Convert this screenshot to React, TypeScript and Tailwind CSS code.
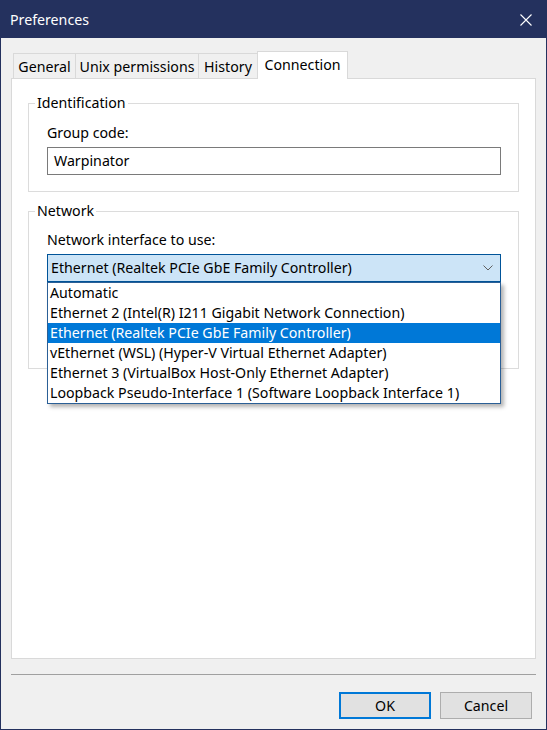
const items = [
    'Automatic',
    'Ethernet 2 (Intel(R) I211 Gigabit Network Connection)',
    'Ethernet (Realtek PCIe GbE Family Controller)',
    'vEthernet (WSL) (Hyper-V Virtual Ethernet Adapter)',
    'Ethernet 3 (VirtualBox Host-Only Ethernet Adapter)',
    'Loopback Pseudo-Interface 1 (Software Loopback Interface 1)',
];

const selected = 2;

function GroupBox({ title, className, children }: { title: string; className: string; children: React.ReactNode }) {
    return (
        <div className={`relative ml-[16px] w-[491px] border border-[#dcdcdc] pl-[18px] ${className}`}>
            <span className="absolute left-[6px] top-[-11px] bg-white px-[2px] leading-[20px]">{title}</span>
            {children}
        </div>
    );
}

export default function App() {
    return (
        <div className="w-[547px] h-[730px] border border-[#24315e] bg-[#f0f0f0] flex flex-col font-['Noto_Sans',sans-serif] text-[14.2px] text-black">
            {/* Title bar */}
            <div className="h-[37px] shrink-0 bg-[#24315e] flex items-center justify-between pl-[9px] pr-[14px] text-white">
                <span className="leading-[20px]">Preferences</span>
                <svg width="12" height="12" viewBox="0 0 12 12" className="text-white">
                    <path d="M0.5 0.5L11.5 11.5M11.5 0.5L0.5 11.5" stroke="currentColor" strokeWidth={1.1} />
                </svg>
            </div>

            <div className="flex-1 flex flex-col px-[10px]">
                {/* Tabs */}
                <div className="mt-[13px] h-[27px] flex items-end pl-[2px]">
                    <div className="w-[63px] h-[25px] border-t border-l border-r border-[#d9d9d9] flex items-center justify-center leading-[20px] pt-[2px]">General</div>
                    <div className="-ml-px w-[124px] h-[25px] border-t border-l border-r border-[#d9d9d9] flex items-center justify-center leading-[20px] pt-[2px]">Unix permissions</div>
                    <div className="-ml-px w-[60px] h-[25px] border-t border-l border-r border-[#d9d9d9] flex items-center justify-center leading-[20px] pt-[2px]">History</div>
                    <div className="-ml-px -mb-px relative z-10 w-[91px] h-[28px] bg-white border-t border-l border-r border-[#d9d9d9] flex items-center justify-center leading-[20px] pb-[1px]">Connection</div>
                </div>

                {/* Pane */}
                <div className="h-[581px] border border-[#d9d9d9] bg-white">
                    <GroupBox title="Identification" className="mt-[24px] h-[89px] pt-[19px]">
                        <div className="leading-[20px]">Group code:</div>
                        <div className="mt-[4px] w-[454px] h-[28px] border border-[#7a7a7a] flex items-center pl-[6px] leading-[20px]">Warpinator</div>
                    </GroupBox>

                    <GroupBox title="Network" className="mt-[19px] h-[158px] pt-[18px]">
                        <div className="leading-[20px]">Network interface to use:</div>
                        <div className="relative mt-[4px] w-[454px]">
                            <div className="h-[28px] border border-[#005499] bg-[#cce4f7] flex items-center justify-between pl-[3px] pr-[7px] leading-[20px]">
                                <span>{items[selected]}</span>
                                <svg width="10" height="6" viewBox="0 0 10 6">
                                    <path d="M0.5 0.5L5 5L9.5 0.5" fill="none" stroke="#606060" strokeWidth={1} />
                                </svg>
                            </div>
                            <div className="absolute left-0 top-full z-20 w-[454px] border border-[#2a5f96] bg-white shadow-[3px_3px_4px_rgba(0,0,0,0.3)]">
                                {items.map((item, i) => (
                                    <div
                                        key={i}
                                        className={`h-[20px] pl-[2px] leading-[20px] whitespace-nowrap ${i === selected ? 'bg-[#0078d7] text-white' : ''}`}
                                    >
                                        {item}
                                    </div>
                                ))}
                            </div>
                        </div>
                    </GroupBox>
                </div>

                {/* Footer */}
                <div className="mt-[15px] h-px bg-[#a0a0a0]" />
                <div className="mt-[17px] flex justify-end gap-[9px] pr-[4px]">
                    <button className="w-[92px] h-[27px] border-2 border-[#0078d7] bg-[#e1e1e1] leading-[20px]">OK</button>
                    <button className="w-[92px] h-[27px] border border-[#adadad] bg-[#e1e1e1] leading-[20px]">Cancel</button>
                </div>
            </div>
        </div>
    );
}
